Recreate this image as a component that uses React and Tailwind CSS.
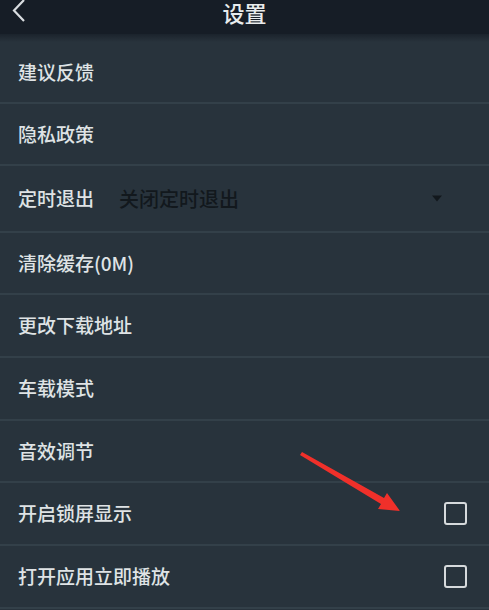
import { useState } from 'react'

const font = { fontFamily: '"Noto Sans CJK SC", "Liberation Sans", sans-serif' }

function Row({ label, h = 'h-[62px]', children }) {
  return (
    <div className={`flex items-center ${h} border-b-2 border-[#334049] pl-[18px] pr-[22px]`}>
      <span className="text-[19px] font-medium text-[#dfe3e5] whitespace-nowrap">{label}</span>
      {children}
    </div>
  )
}

function Check({ checked, onClick }) {
  return (
    <button
      onClick={onClick}
      className="ml-auto w-[23px] h-[23px] rounded-[3px] border-[2.5px] border-[#d6dadc] flex items-center justify-center"
    >
      {checked && <span className="w-[11px] h-[11px] bg-[#d6dadc]" />}
    </button>
  )
}

export default function App() {
  const [lock, setLock] = useState(false)
  const [play, setPlay] = useState(false)

  return (
    <div className="relative w-[489px] h-[610px] overflow-hidden bg-[#28333c]" style={font}>
      <div className="h-[34px] bg-[#161d26] flex items-center relative">
        <svg className="absolute left-[11px] top-[-1px]" width="16" height="24" viewBox="0 0 16 24">
          <path d="M13 1 L3 11.5 L13 22" fill="none" stroke="#d9dde0" strokeWidth="2.2" />
        </svg>
        <div className="w-full text-center text-[22px] font-medium text-[#e8ebec] leading-none -mt-[10px]">设置</div>
      </div>
      <div className="h-[8px] bg-gradient-to-b from-[#1b232c] to-[#28333c]" />

      <Row label="建议反馈" h="h-[62px]" />
      <Row label="隐私政策" h="h-[62px]" />
      <Row label="定时退出" h="h-[67px]">
        <span className="ml-[25px] text-[20px] font-medium text-[#12181d]">关闭定时退出</span>
        <svg className="ml-auto mr-[24px]" width="12" height="7" viewBox="0 0 12 7">
          <path d="M1 0.5 L11 0.5 L6 6.5 Z" fill="#12181d" />
        </svg>
      </Row>
      <Row label="清除缓存(0M)" h="h-[62px]" />
      <Row label="更改下载地址" h="h-[63px]" />
      <Row label="车载模式" h="h-[63px]" />
      <Row label="音效调节" h="h-[62px]" />
      <Row label="开启锁屏显示" h="h-[63px]">
        <Check checked={lock} onClick={() => setLock(!lock)} />
      </Row>
      <Row label="打开应用立即播放" h="h-[63px]">
        <Check checked={play} onClick={() => setPlay(!play)} />
      </Row>

      <svg className="absolute left-0 top-0 pointer-events-none" width="489" height="610">
        <path d="M302 452 L384 498 L387 493 L400 511 L378 509 L381 504 L300 455 Z" fill="#f0302a" />
      </svg>
    </div>
  )
}
